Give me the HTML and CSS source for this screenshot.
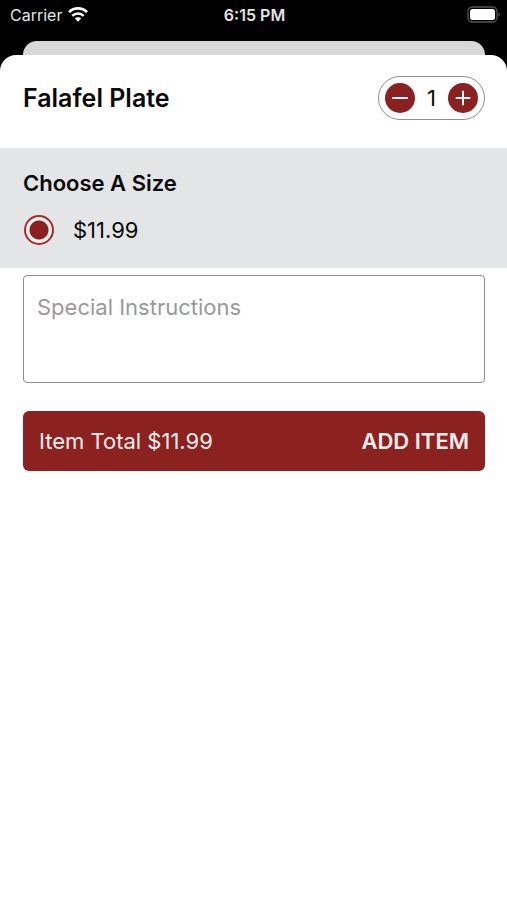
FILE: index.html
```html
<!DOCTYPE html>
<html lang="en">
<head>
<meta charset="utf-8">
<meta name="viewport" content="width=device-width, initial-scale=1">
<title>Falafel Plate</title>
<link rel="stylesheet" href="styles.css">
</head>
<body>
<div class="status">
  <div class="carrier">
    <span>Carrier</span>
    <svg class="wifi" viewBox="0 0 20 15" aria-hidden="true">
      <path d="M1 5.2C6 0.1 14 0.1 19 5.2" fill="none" stroke="#fff" stroke-width="2.6"/>
      <path d="M4.3 8.9C7.6 5.7 12.4 5.7 15.7 8.9" fill="none" stroke="#fff" stroke-width="2.4"/>
      <path d="M10 14.8L6.8 11.6C8.5 9.9 11.5 9.9 13.2 11.6Z" fill="#fff"/>
    </svg>
  </div>
  <time class="clock">6:15 PM</time>
  <svg class="battery" viewBox="0 0 34 18" aria-hidden="true">
    <rect x="1" y="1" width="29" height="15" rx="4.5" fill="none" stroke="#555" stroke-width="1.3"/>
    <rect x="3" y="3" width="25" height="11" rx="2.5" fill="#fff"/>
    <path d="M31.5 6.2C33.4 7 33.4 10 31.5 10.8Z" fill="#555"/>
  </svg>
</div>
<div class="backdrop"></div>
<main class="sheet">
  <header class="header">
    <h1 class="title">Falafel Plate</h1>
    <div class="stepper">
      <button class="step" type="button" aria-label="Decrease quantity">
        <svg viewBox="0 0 30 30" aria-hidden="true"><path d="M8 15H22"/></svg>
      </button>
      <output class="count">1</output>
      <button class="step" type="button" aria-label="Increase quantity">
        <svg viewBox="0 0 30 30" aria-hidden="true"><path d="M8.5 15H21.5M15 8.5V21.5"/></svg>
      </button>
    </div>
  </header>
  <section class="sizes">
    <h2 class="subtitle">Choose A Size</h2>
    <label class="option">
      <input class="radio" type="radio" name="size" checked>
      <span>$11.99</span>
    </label>
  </section>
  <form class="order">
    <textarea class="notes" placeholder="Special Instructions" aria-label="Special Instructions"></textarea>
    <button class="add" type="button">
      <span>Item Total $11.99</span>
      <span class="add-label">ADD ITEM</span>
    </button>
  </form>
</main>
</body>
</html>
```
FILE: styles.css
```css
* {
  box-sizing: border-box;
}

body {
  margin: 0;
  min-height: 100vh;
  display: flex;
  flex-direction: column;
  background: #000;
  color: #090909;
  font-family: Inter, "Liberation Sans", sans-serif;
  font-size: 22px;
}

.status {
  display: grid;
  grid-template-columns: 1fr auto 1fr;
  align-items: center;
  height: 29px;
  margin-bottom: 12px;
  padding: 0 8px 0 10px;
  color: #e4e4e4;
  font-size: 16px;
}

.carrier {
  display: flex;
  align-items: center;
  gap: 6px;
}

.wifi {
  width: 20px;
  height: 15px;
}

.clock {
  font-weight: 600;
}

.battery {
  width: 34px;
  height: 18px;
  margin-right: -2px;
  justify-self: end;
}

.backdrop {
  height: 34px;
  margin: 0 22px -20px 23px;
  border-radius: 14px 14px 0 0;
  background: #d8d8d8;
}

.sheet {
  position: relative;
  flex: 1;
  border-radius: 16px 16px 0 0;
  background: #fff;
}

.header {
  display: flex;
  align-items: center;
  justify-content: space-between;
  padding: 21px 22px 28px 23px;
}

.title {
  margin: 0;
  font-size: 25px;
  font-weight: 600;
}

.stepper {
  display: flex;
  align-items: center;
  justify-content: space-between;
  width: 107px;
  height: 44px;
  padding: 0 6px;
  border: 1px solid #8e8e8e;
  border-radius: 22px;
}

.step {
  width: 30px;
  height: 30px;
  padding: 0;
  border: 0;
  border-radius: 50%;
  background: #8b2020;
}

.step svg {
  display: block;
  fill: none;
  stroke: #fff;
  stroke-width: 2;
  stroke-linecap: round;
}

.sizes {
  padding: 20px 22px 22px 23px;
  background: #e3e5e6;
}

.subtitle {
  margin: 0 0 16px;
  font-size: 22px;
  font-weight: 600;
  line-height: 30px;
}

.option {
  display: flex;
  align-items: center;
  gap: 19px;
  height: 32px;
}

.radio {
  appearance: none;
  width: 30px;
  height: 30px;
  margin: 0 0 0 1px;
  border: 2px solid #a52c2a;
  border-radius: 50%;
  background: radial-gradient(circle, #8b2020 9px, #f4f0f0 10px);
}

.order {
  display: flex;
  flex-direction: column;
  gap: 28px;
  padding: 7px 22px 7px 23px;
}

.notes {
  height: 108px;
  padding: 18px 13px;
  border: 1px solid #8e8e8e;
  border-radius: 4px;
  resize: none;
  background: #fff;
  color: inherit;
  font: inherit;
}

.notes::placeholder {
  color: #999;
}

.add {
  display: flex;
  align-items: center;
  justify-content: space-between;
  height: 60px;
  padding: 0 16px;
  border: 0;
  border-radius: 6px;
  background: #8b2220;
  color: #faeeee;
  font: inherit;
}

.add-label {
  font-weight: 600;
}
```
